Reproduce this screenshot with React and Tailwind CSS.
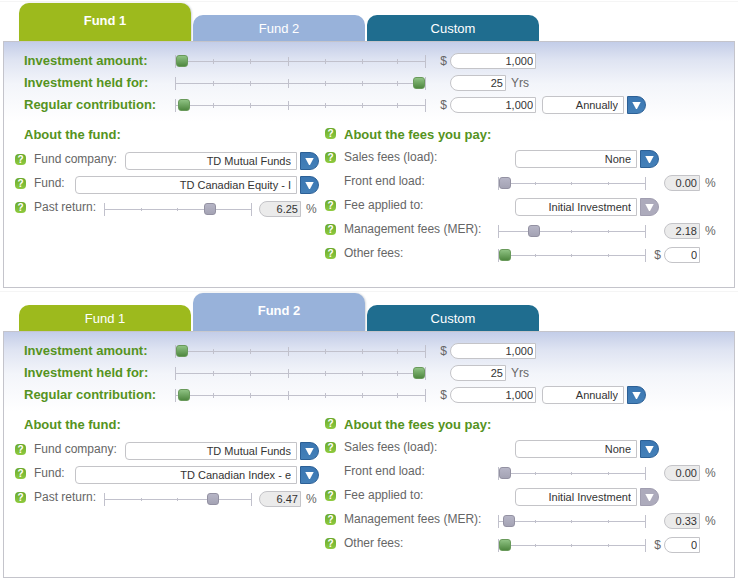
import { useId, useRef } from "react";
import clsx from "clsx";

const TABS = [
  { name: "Fund 1", color: "bg-[#9dba1d]" },
  { name: "Fund 2", color: "bg-[#98b2da]" },
  { name: "Custom", color: "bg-[#1f6d8f]" },
];

const THUMB =
  "[&::-webkit-slider-thumb]:h-3 [&::-webkit-slider-thumb]:w-3 [&::-webkit-slider-thumb]:appearance-none [&::-webkit-slider-thumb]:rounded-[3px] [&::-webkit-slider-thumb]:border";
const GREEN_THUMB =
  "[&::-webkit-slider-thumb]:border-[#699a5b] [&::-webkit-slider-thumb]:bg-linear-to-b [&::-webkit-slider-thumb]:from-[#8fc283] [&::-webkit-slider-thumb]:to-[#4f8840]";
const GRAY_THUMB =
  "[&::-webkit-slider-thumb]:border-[#9391a2] [&::-webkit-slider-thumb]:bg-linear-to-b [&::-webkit-slider-thumb]:from-[#b6b5c6] [&::-webkit-slider-thumb]:to-[#a4a3b4]";

function Slider({ label, value, min = 0, max, wide, locked }) {
  const ticks = wide ? ["", "", "tall", "", "", ""] : ["", "", ""];
  return (
    <div className={clsx("grid h-[13px] shrink-0 items-center", wide ? "w-[251px]" : "w-[148px]")}>
      <div className="col-start-1 row-start-1 h-px bg-[#c1c1cc]" />
      <div
        className={clsx(
          "col-start-1 row-start-1 grid h-[13px] items-center border-x border-[#c1c1cc]",
          wide ? "grid-cols-[38fr_37fr_38fr_38fr_37fr_35fr_27fr]" : "grid-cols-4"
        )}
      >
        {ticks.map((t, i) => (
          <div key={i} className={clsx("border-r border-[#c1c1cc]", t === "tall" ? "h-[9px]" : wide ? "h-[5px]" : "h-[3px]")} />
        ))}
      </div>
      <input
        type="range"
        aria-label={label}
        min={min}
        max={max}
        step="any"
        defaultValue={value}
        disabled={locked}
        className={clsx(
          "col-start-1 row-start-1 mx-px h-[13px] min-w-0 appearance-none bg-transparent",
          THUMB,
          locked ? GRAY_THUMB : GREEN_THUMB
        )}
      />
    </div>
  );
}

function NumberBox({ id, value, width, locked }) {
  return (
    <input
      id={id}
      type="text"
      defaultValue={value}
      readOnly={locked}
      className={clsx(
        "h-4 shrink-0 rounded-l-full border border-[#c4c4c8] pr-0.5 text-right text-[11px] leading-[14px] text-[#333]",
        locked ? "bg-[#ebebeb]" : "bg-white",
        width
      )}
    />
  );
}

function Dropdown({ id, label, value, width, locked }) {
  const ref = useRef(null);
  return (
    <>
      <select
        id={id}
        ref={ref}
        aria-label={label}
        defaultValue={value}
        className={clsx(
          "h-[18px] min-w-0 appearance-none rounded-l-[4px] border border-[#c4c4c8] bg-white pr-[5px] text-[11px] leading-4 text-[#333] [text-align-last:right]",
          width
        )}
      >
        <option>{value}</option>
      </select>
      <button
        type="button"
        aria-label={`Open ${label}`}
        onClick={() => ref.current.showPicker()}
        className={clsx(
          "ml-[3px] flex h-[18px] w-[19px] shrink-0 items-center justify-center rounded-r-[9px] border",
          locked
            ? "border-[#a19eb0] bg-[#adabbc]"
            : "border-[#2c6096] bg-linear-to-b from-[#3a76b2] to-[#4480b8]"
        )}
      >
        <svg viewBox="0 0 9 7" className="h-[7px] w-[9px]">
          <path d="M0.3 0h8.4L5 7H4z" fill="#fff" />
        </svg>
      </button>
    </>
  );
}

function Help({ topic }) {
  return (
    <button
      type="button"
      aria-label={`Help: ${topic}`}
      className="flex h-[11px] w-[11px] shrink-0 items-center justify-center rounded-[4px] bg-linear-to-b from-[#69a92f] to-[#8fcb3f] text-[10px] leading-[11px] font-bold text-white"
    >
      ?
    </button>
  );
}

function RowLabel({ id, text, help = true, width }) {
  return (
    <div className={clsx("flex shrink-0 items-center gap-2 pb-1", width)}>
      {help ? <Help topic={text} /> : <span className="w-[11px]" />}
      <label htmlFor={id} className="whitespace-nowrap">
        {text}:
      </label>
    </div>
  );
}

function TopRow({ label, value, slider, money, suffix, boxWidth, children }) {
  const id = useId();
  return (
    <div className="flex h-[22px] items-center">
      <label htmlFor={id} className="w-[151px] shrink-0 text-[13px] font-bold whitespace-nowrap text-[#559321]">
        {label}:
      </label>
      <Slider wide label={label} {...slider} />
      <span className="w-6 shrink-0 pr-[3px] text-right">{money && "$"}</span>
      <NumberBox id={id} value={value} width={boxWidth} />
      {suffix && <span className="ml-[5px]">{suffix}</span>}
      {children}
    </div>
  );
}

function FeeSlider({ label, help, value, amount, max, locked, money }) {
  const id = useId();
  return (
    <div className="flex h-6 items-center">
      <RowLabel id={id} text={label} help={help} width="w-[173px]" />
      <Slider label={label} value={amount} max={max} locked={locked} />
      <span className="w-[18px] shrink-0 pr-[3px] text-right">{money && "$"}</span>
      <NumberBox id={id} value={value} width="w-9" locked={locked} />
      {!money && <span className="ml-[5px]">%</span>}
    </div>
  );
}

function FeeSelect({ label, value, locked }) {
  const id = useId();
  return (
    <div className="flex h-6 items-center">
      <RowLabel id={id} text={label} width="w-[190px]" />
      <Dropdown id={id} label={label} value={value} width="w-[122px]" locked={locked} />
    </div>
  );
}

function FundSelect({ label, value, labelWidth }) {
  const id = useId();
  return (
    <div className="flex h-6 items-center">
      <RowLabel id={id} text={label} width={labelWidth} />
      <Dropdown id={id} label={label} value={value} width="flex-1" />
    </div>
  );
}

function FundPanel({ active, fund, pastReturn, mer }) {
  const returnId = useId();
  return (
    <section className="border-t border-[#f5f5f5] px-[3px] pt-px">
      <div role="tablist" className="flex h-[38px] items-end gap-0.5 px-4">
        {TABS.map((tab, i) => (
          <button
            key={tab.name}
            type="button"
            role="tab"
            aria-selected={i === active}
            className={clsx(
              "w-[172px] rounded-t-[10px] text-[13px] text-white",
              tab.color,
              i === active ? "h-[38px] pb-0.5 font-bold shadow-[1px_0_2px_#d4d8dc]" : "h-[26px] pt-0.5"
            )}
          >
            {tab.name}
          </button>
        ))}
      </div>
      <div className="border border-[#c4c4cb] bg-[linear-gradient(#c3cde8,#dfe4f2_18px,#f3f5fa_42px,#fff_80px)] pt-2 pb-5">
        <div className="pl-5">
          <TopRow label="Investment amount" value="1,000" money boxWidth="w-[86px]" slider={{ value: 1000, min: 1000, max: 100000 }} />
          <TopRow label="Investment held for" value="25" suffix="Yrs" boxWidth="w-14" slider={{ value: 25, max: 25 }} />
          <TopRow label="Regular contribution" value="1,000" money boxWidth="w-[86px]" slider={{ value: 1000, max: 100000 }}>
            <div className="ml-1.5 flex">
              <Dropdown label="Contribution frequency" value="Annually" width="w-[82px]" />
            </div>
          </TopRow>
        </div>
        <div className="mt-[7px] grid grid-cols-[316fr_414fr]">
          <div className="pr-px pl-[11px]">
            <h2 className="mb-0.5 pl-[9px] text-[13px] leading-6 font-bold text-[#559321]">About the fund:</h2>
            <FundSelect label="Fund company" value="TD Mutual Funds" labelWidth="w-[110px]" />
            <FundSelect label="Fund" value={fund} labelWidth="w-[60px]" />
            <div className="flex h-6 items-center">
              <RowLabel id={returnId} text="Past return" width="w-[89px]" />
              <Slider label="Past return" value={pastReturn} max={8.5} locked />
              <span className="w-[7px] shrink-0" />
              <NumberBox id={returnId} value={pastReturn.toFixed(2)} width="w-[42px]" locked />
              <span className="ml-[5px]">%</span>
            </div>
          </div>
          <div className="pl-[5px]">
            <div className="flex h-6 items-center gap-2">
              <div className="pb-1">
                <Help topic="About the fees you pay" />
              </div>
              <h2 className="text-[13px] font-bold text-[#559321]">About the fees you pay:</h2>
            </div>
            <FeeSelect label="Sales fees (load)" value="None" />
            <FeeSlider label="Front end load" help={false} value="0.00" amount={0} max={10} locked />
            <FeeSelect label="Fee applied to" value="Initial Investment" locked />
            <FeeSlider label="Management fees (MER)" value={mer.toFixed(2)} amount={mer} max={10} locked />
            <FeeSlider label="Other fees" value="0" amount={0} max={1000} money />
          </div>
        </div>
      </div>
    </section>
  );
}

export default function App() {
  return (
    <main className="flex flex-col gap-[3px] bg-white py-px font-['Liberation_Sans',Arial,sans-serif] text-[12px] text-[#666]">
      <FundPanel active={0} fund="TD Canadian Equity - I" pastReturn={6.25} mer={2.18} />
      <FundPanel active={1} fund="TD Canadian Index - e" pastReturn={6.47} mer={0.33} />
    </main>
  );
}
